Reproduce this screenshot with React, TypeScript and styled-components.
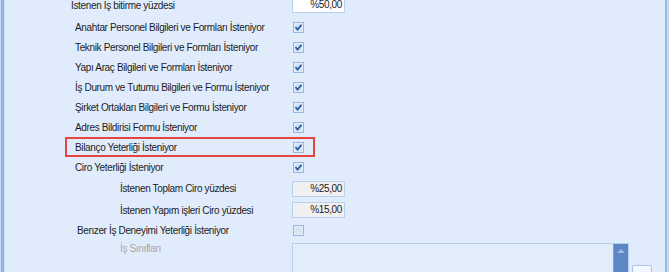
import React from 'react';
import styled, { createGlobalStyle } from 'styled-components';

const Global = createGlobalStyle`
  html, body { margin: 0; padding: 0; background: #e0ecfc; }
  body { font-family: Tahoma, "Liberation Sans", "DejaVu Sans", sans-serif; }
`;

const Frame = styled.div`
  width: 669px;
  height: 272px;
  overflow: hidden;
  background: #e0ecfc;
  box-shadow: inset 1px 0 0 #c9dcf5, inset 4px 0 0 #93b4e3, inset 5px 0 0 #cddff6,
    inset -2px 0 0 #c8daf3, inset -4px 0 0 #97b6e2;
  font-size: 10px;
  letter-spacing: -0.35px;
  color: #1c1c1c;
`;

const Form = styled.div`
  display: flex;
  flex-direction: column;
  margin-top: -7px;
  padding-left: 65px;
`;

const Row = styled.div<{ h: number; highlight?: boolean }>`
  display: grid;
  grid-template-columns: 227px auto;
  justify-content: start;
  align-items: center;
  height: ${(p) => p.h}px;
  width: ${(p) => (p.highlight ? '250px' : 'auto')};
  box-sizing: border-box;
  outline: ${(p) => (p.highlight ? '2px solid #e4463f' : 'none')};
  outline-offset: -2px;
`;

const Label = styled.span<{ indent: number; muted?: boolean }>`
  padding-left: ${(p) => p.indent}px;
  white-space: nowrap;
  color: ${(p) => (p.muted ? '#a4a9b1' : '#1c1c1c')};
`;

const NumBox = styled.div<{ disabled?: boolean }>`
  width: 53px;
  height: 16px;
  box-sizing: border-box;
  border: 1px solid #b9cfee;
  background: ${(p) => (p.disabled ? '#f0f0f0' : '#ffffff')};
  text-align: right;
  padding-right: 2px;
  line-height: 14px;
`;

const ListRow = styled.div`
  display: grid;
  grid-template-columns: 227px auto auto;
  justify-content: start;
  align-items: start;
  padding-top: 2px;
`;

const ListBox = styled.div`
  width: 337px;
  height: 60px;
  box-sizing: border-box;
  border: 1px solid #b9cfee;
  background: #e2edfc;
  display: flex;
  justify-content: flex-end;
`;

const ScrollBar = styled.div`
  width: 15px;
  height: 100%;
  background: #5c86c4;
  border-left: 1px solid #7c9fd3;
  box-sizing: border-box;
  display: flex;
  justify-content: center;
  padding-top: 5px;
`;

const Arrow = styled.div`
  width: 0;
  height: 0;
  border-left: 4px solid transparent;
  border-right: 4px solid transparent;
  border-bottom: 4px solid #9fbbe5;
`;

const DotsButton = styled.div`
  width: 20px;
  height: 20px;
  margin-top: 22px;
  margin-left: 3px;
  box-sizing: border-box;
  border: 1px solid #a9c2e6;
  border-radius: 2px;
  background: linear-gradient(#f7faff, #e3ecf8);
`;

const CheckWrap = styled.div`
  padding-left: 1px;
  display: flex;
  align-items: center;
`;

const Check = ({ checked }: { checked: boolean }) => (
  <CheckWrap>
    <svg width="11" height="11" viewBox="0 0 11 11">
      <rect x="0.5" y="0.5" width="10" height="10" fill="#eef4fd" stroke="#98b6e2" />
      <rect x="1.5" y="1.5" width="8" height="8" fill="#d6e4f8" />
      {checked && (
        <path d="M2.5 5 L4.5 7.6 L8.5 2.8" fill="none" stroke="#2d5fa8" strokeWidth="1.8" />
      )}
    </svg>
  </CheckWrap>
);

const checks = [
  'Anahtar Personel Bilgileri ve Formları İsteniyor',
  'Teknik Personel Bilgileri ve Formları İsteniyor',
  'Yapı Araç Bilgileri ve Formları İsteniyor',
  'İş Durum ve Tutumu Bilgileri ve Formu İsteniyor',
  'Şirket Ortakları Bilgileri ve Formu İsteniyor',
  'Adres Bildirisi Formu İsteniyor',
];

export default function App() {
  return (
    <>
      <Global />
      <Frame>
        <Form>
          <Row h={24}>
            <Label indent={6}>İstenen İş bitirme yüzdesi</Label>
            <NumBox>%50,00</NumBox>
          </Row>
          {checks.map((c) => (
            <Row h={20} key={c}>
              <Label indent={10}>{c}</Label>
              <Check checked />
            </Row>
          ))}
          <Row h={20} highlight>
            <Label indent={10}>Bilanço Yeterliği İsteniyor</Label>
            <Check checked />
          </Row>
          <Row h={20}>
            <Label indent={10}>Ciro Yeterliği İsteniyor</Label>
            <Check checked />
          </Row>
          <Row h={23}>
            <Label indent={55}>İstenen Toplam Ciro yüzdesi</Label>
            <NumBox disabled>%25,00</NumBox>
          </Row>
          <Row h={20}>
            <Label indent={55}>İstenen Yapım işleri Ciro yüzdesi</Label>
            <NumBox disabled>%15,00</NumBox>
          </Row>
          <Row h={21}>
            <Label indent={12}>Benzer İş Deneyimi Yeterliği İsteniyor</Label>
            <Check checked={false} />
          </Row>
          <ListRow>
            <Label indent={55} muted>İş Sınıfları</Label>
            <ListBox>
              <ScrollBar>
                <Arrow />
              </ScrollBar>
            </ListBox>
            <DotsButton />
          </ListRow>
        </Form>
      </Frame>
    </>
  );
}
